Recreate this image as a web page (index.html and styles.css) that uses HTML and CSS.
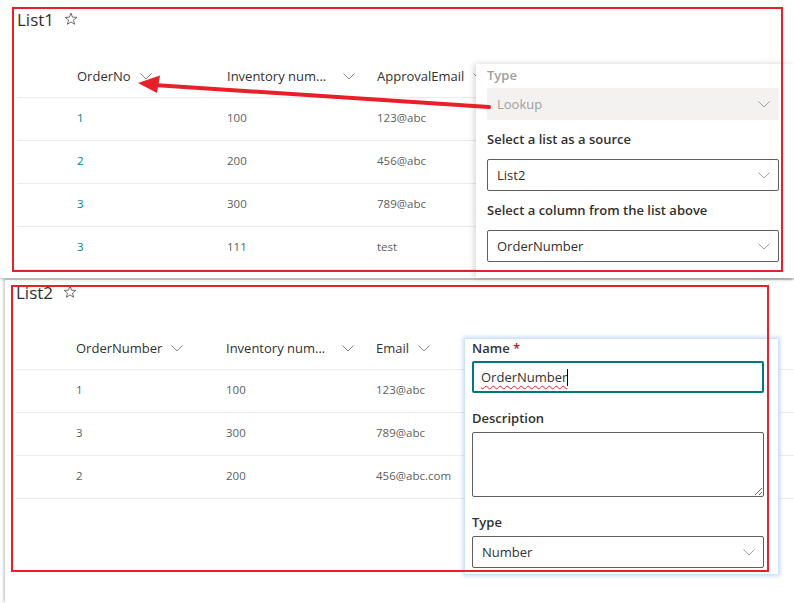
FILE: index.html
```html
<!DOCTYPE html>
<html lang="en">
<head>
<meta charset="utf-8">
<title>Lists</title>
<link rel="stylesheet" href="styles.css">
</head>
<body>
<section class="shot shot1">
  <div class="page">
    <div class="title-row">
      <h1 class="title">List1</h1>
      <svg class="star" width="14" height="14" viewBox="0 0 14 14"><polygon points="7,1.1 8.53,5.2 12.9,5.38 9.47,8.1 10.64,12.32 7,9.9 3.36,12.32 4.53,8.1 1.1,5.38 5.47,5.2"/></svg>
    </div>
    <div class="list">
      <div class="row head">
        <div class="cell"><span>OrderNo</span><svg class="chev" width="12" height="7" viewBox="0 0 12 7"><path d="M0.5 0.5 L6 6 L11.5 0.5"/></svg></div>
        <div class="cell"><span>Inventory num...</span><svg class="chev wide" width="12" height="7" viewBox="0 0 12 7"><path d="M0.5 0.5 L6 6 L11.5 0.5"/></svg></div>
        <div class="cell"><span>ApprovalEmail</span><svg class="chev" width="12" height="7" viewBox="0 0 12 7"><path d="M0.5 0.5 L6 6 L11.5 0.5"/></svg></div>
      </div>
      <div class="row"><div class="cell link">1</div><div class="cell">100</div><div class="cell">123@abc</div></div>
      <div class="row"><div class="cell link">2</div><div class="cell">200</div><div class="cell">456@abc</div></div>
      <div class="row"><div class="cell link">3</div><div class="cell">300</div><div class="cell">789@abc</div></div>
      <div class="row"><div class="cell link">3</div><div class="cell">111</div><div class="cell">test</div></div>
    </div>
  </div>

  <div class="panel panel1">
    <div class="label label-disabled first">Type</div>
    <div class="dropdown disabled"><span>Lookup</span><svg class="chev dd" width="12" height="7" viewBox="0 0 12 7"><path d="M0.5 0.5 L6 6 L11.5 0.5"/></svg></div>
    <div class="label spaced">Select a list as a source</div>
    <div class="dropdown"><span>List2</span><svg class="chev dd" width="12" height="7" viewBox="0 0 12 7"><path d="M0.5 0.5 L6 6 L11.5 0.5"/></svg></div>
    <div class="label spaced">Select a column from the list above</div>
    <div class="dropdown"><span>OrderNumber</span><svg class="chev dd" width="12" height="7" viewBox="0 0 12 7"><path d="M0.5 0.5 L6 6 L11.5 0.5"/></svg></div>
  </div>

  <div class="mark mark1"></div>
  <svg class="arrow" width="794" height="278" viewBox="0 0 794 278">
    <line x1="489" y1="107" x2="154" y2="85"/>
    <polygon points="138,83 160,75.5 157,93"/>
  </svg>
</section>

<section class="shot shot2">
  <div class="page">
    <div class="title-row">
      <h1 class="title">List2</h1>
      <svg class="star" width="14" height="14" viewBox="0 0 14 14"><polygon points="7,1.1 8.53,5.2 12.9,5.38 9.47,8.1 10.64,12.32 7,9.9 3.36,12.32 4.53,8.1 1.1,5.38 5.47,5.2"/></svg>
    </div>
    <div class="list">
      <div class="row head">
        <div class="cell"><span>OrderNumber</span><svg class="chev" width="12" height="7" viewBox="0 0 12 7"><path d="M0.5 0.5 L6 6 L11.5 0.5"/></svg></div>
        <div class="cell"><span>Inventory num...</span><svg class="chev wide" width="12" height="7" viewBox="0 0 12 7"><path d="M0.5 0.5 L6 6 L11.5 0.5"/></svg></div>
        <div class="cell"><span>Email</span><svg class="chev" width="12" height="7" viewBox="0 0 12 7"><path d="M0.5 0.5 L6 6 L11.5 0.5"/></svg></div>
      </div>
      <div class="row"><div class="cell">1</div><div class="cell">100</div><div class="cell">123@abc</div></div>
      <div class="row"><div class="cell">3</div><div class="cell">300</div><div class="cell">789@abc</div></div>
      <div class="row"><div class="cell">2</div><div class="cell">200</div><div class="cell">456@abc.com</div></div>
    </div>
  </div>

  <div class="panel panel2">
    <div class="label first2">Name <span class="req">*</span></div>
    <div class="input focused"><span class="typed">OrderNumber</span><span class="caret"></span></div>
    <div class="label spaced2">Description</div>
    <textarea class="textarea"></textarea>
    <div class="label spaced2">Type</div>
    <div class="dropdown"><span>Number</span><svg class="chev dd" width="12" height="7" viewBox="0 0 12 7"><path d="M0.5 0.5 L6 6 L11.5 0.5"/></svg></div>
  </div>

  <div class="mark mark2"></div>
</section>
</body>
</html>
```

FILE: styles.css
```css
* { box-sizing: border-box; }

html, body {
  margin: 0;
  padding: 0;
  background: #ffffff;
  overflow: hidden;
}

body {
  width: 794px;
  height: 603px;
  font-family: "Open Sans", "Liberation Sans", sans-serif;
  color: #323130;
}

.shot {
  position: relative;
  background: #ffffff;
}

.shot1 {
  height: 278px;
  box-shadow: 0 1px 3px rgba(0, 0, 0, 0.3);
  z-index: 2;
}

.shot2 {
  margin-top: 2px;
  margin-left: 5px;
  height: 323px;
  box-shadow: -1px -1px 3px rgba(0, 0, 0, 0.28);
  z-index: 1;
}

.page {
  padding-left: 17px;
  padding-top: 8px;
}

.shot2 .page {
  padding-left: 11px;
  padding-top: 1px;
}

.title-row {
  display: flex;
  align-items: center;
  gap: 10px;
  height: 24px;
}

.title {
  margin: 0;
  font-size: 17px;
  font-weight: 400;
  line-height: 24px;
  color: #323130;
}

.star {
  fill: none;
  stroke: #605e5c;
  stroke-width: 0.9;
  margin-top: -2px;
}

.list {
  margin-top: 23px;
}

.shot2 .list {
  margin-top: 22px;
}

.row {
  display: flex;
  align-items: center;
  height: 43px;
  padding-left: 60px;
  padding-bottom: 3px;
  border-bottom: 1px solid #edebe9;
  font-size: 11.5px;
  color: #605e5c;
}

.row.head {
  padding-bottom: 0;
  font-size: 13px;
  color: #323130;
}

.cell {
  width: 150px;
  display: flex;
  align-items: center;
  gap: 9px;
  white-space: nowrap;
}

.cell.link {
  color: #038387;
}

.chev {
  fill: none;
  stroke: #8a8886;
  stroke-width: 1;
  flex: none;
}

.chev.wide {
  margin-left: 8px;
}

/* panels */
.panel {
  position: absolute;
  background: #ffffff;
  display: flex;
  flex-direction: column;
}

.panel1 {
  left: 476px;
  top: 64px;
  right: 0;
  bottom: 0;
  padding: 0 15px 0 11px;
  box-shadow: -2px 0 6px rgba(0, 0, 0, 0.16);
}

.panel2 {
  left: 460px;
  top: 59px;
  width: 313px;
  height: 235px;
  padding: 0 14px 0 7px;
  box-shadow: 0 0 4px 2px rgba(140, 185, 245, 0.55);
}

.label {
  font-size: 13px;
  font-weight: 600;
  line-height: 20px;
  color: #323130;
}

.label.first { margin-top: 1px; margin-bottom: 3px; }
.label.spaced { margin-top: 9px; margin-bottom: 10px; }
.label.first2 { line-height: 18px; margin-bottom: 4px; }
.label.spaced2 { margin-top: 15px; margin-bottom: 4px; }

.label-disabled { color: #a19f9d; }

.req { color: #a4262c; }

.dropdown {
  display: flex;
  align-items: center;
  justify-content: space-between;
  height: 32px;
  padding: 0 8px 0 9px;
  border: 1px solid #605e5c;
  border-radius: 2px;
  font-size: 13px;
  color: #323130;
}

.dropdown.disabled {
  border-color: #f3f2f1;
  background: #f3f2f1;
  color: #a19f9d;
}

.chev.dd {
  stroke: #a19f9d;
}

.input {
  display: flex;
  align-items: center;
  height: 32px;
  padding: 0 8px 0 7px;
  border-radius: 2px;
  font-size: 13px;
  color: #323130;
}

.input.focused {
  border: 2px solid #03787c;
}

.typed {
  text-decoration: underline wavy #e0242c;
  text-decoration-thickness: 1px;
  text-underline-offset: 3px;
  text-decoration-skip-ink: none;
}

.caret {
  width: 1px;
  height: 17px;
  background: #000000;
}

.textarea {
  display: block;
  width: 292px;
  height: 65px;
  margin: 0;
  border: 1px solid #605e5c;
  border-radius: 2px;
  font-family: inherit;
  resize: both;
  background: #ffffff;
}

/* annotations */
.mark {
  position: absolute;
  border: 2px solid #e8202a;
  pointer-events: none;
}

.mark1 {
  left: 12px;
  top: 7px;
  width: 771px;
  height: 265px;
}

.mark2 {
  left: 6px;
  top: 5px;
  width: 758px;
  height: 287px;
}

.arrow {
  position: absolute;
  left: 0;
  top: 0;
  pointer-events: none;
}

.arrow line {
  stroke: #e8202a;
  stroke-width: 4;
  stroke-linecap: round;
}

.arrow polygon {
  fill: #e8202a;
}
```
